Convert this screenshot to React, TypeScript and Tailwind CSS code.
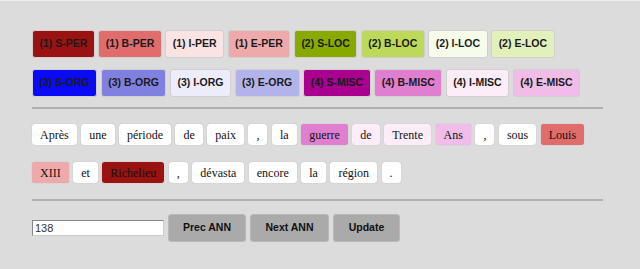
import React from 'react';

// NER annotation viewer: tag legend, annotated tokens, navigation controls
type Tag = { label: string; bg: string };

const TAG_ROWS: Tag[][] = [
  [
    { label: '(1) S-PER', bg: 'bg-[#9b1212]' },
    { label: '(1) B-PER', bg: 'bg-[#e06c6c]' },
    { label: '(1) I-PER', bg: 'bg-[#fae3e3]' },
    { label: '(1) E-PER', bg: 'bg-[#eeaaaa]' },
    { label: '(2) S-LOC', bg: 'bg-[#88aa00]' },
    { label: '(2) B-LOC', bg: 'bg-[#bcd95a]' },
    { label: '(2) I-LOC', bg: 'bg-[#f7fbea]' },
    { label: '(2) E-LOC', bg: 'bg-[#e2f0bc]' },
  ],
  [
    { label: '(3) S-ORG', bg: 'bg-[#0a0af8]' },
    { label: '(3) B-ORG', bg: 'bg-[#8080e0]' },
    { label: '(3) I-ORG', bg: 'bg-[#ececfb]' },
    { label: '(3) E-ORG', bg: 'bg-[#b3b3eb]' },
    { label: '(4) S-MISC', bg: 'bg-[#aa0090]' },
    { label: '(4) B-MISC', bg: 'bg-[#e07fd0]' },
    { label: '(4) I-MISC', bg: 'bg-[#fcedf9]' },
    { label: '(4) E-MISC', bg: 'bg-[#f0bde8]' },
  ],
];

const TOKENS: { w: string; bg?: string }[] = [
  { w: 'Après' },
  { w: 'une' },
  { w: 'période' },
  { w: 'de' },
  { w: 'paix' },
  { w: ',' },
  { w: 'la' },
  { w: 'guerre', bg: 'bg-[#e07fd0]' },
  { w: 'de', bg: 'bg-[#fcedf9]' },
  { w: 'Trente', bg: 'bg-[#fcedf9]' },
  { w: 'Ans', bg: 'bg-[#f0bde8]' },
  { w: ',' },
  { w: 'sous' },
  { w: 'Louis', bg: 'bg-[#e06c6c]' },
  { w: 'XIII', bg: 'bg-[#eeaaaa]' },
  { w: 'et' },
  { w: 'Richelieu', bg: 'bg-[#9b1212]' },
  { w: ',' },
  { w: 'dévasta' },
  { w: 'encore' },
  { w: 'la' },
  { w: 'région' },
  { w: '.' },
];

function TagButton({ tag }: { tag: Tag }) {
  return (
    <button
      className={`shrink-0 whitespace-nowrap h-[28px] px-[6.5px] rounded-[3px] border border-[#cfcfcf] font-bold text-[10.5px] text-[#1a1a1a] ${tag.bg}`}
      style={{ fontFamily: '"Liberation Sans", Arial, sans-serif' }}
    >
      {tag.label}
    </button>
  );
}

export default function App() {
  return (
    <div className="w-[640px] h-[269px] bg-[#dcdcdc] border-t border-[#eeeeee] overflow-hidden">
      <div className="pl-[32px] pt-[29px] w-[603px]">
        <div className="flex flex-col gap-[11px]">
          {TAG_ROWS.map((row, i) => (
            <div key={i} className="flex gap-[3.5px]">
              {row.map((t) => (
                <TagButton key={t.label} tag={t} />
              ))}
            </div>
          ))}
        </div>

        <div className="mt-[10px] h-[2px] bg-[#b0b0b0]" />

        <div
          className="mt-[15px] flex flex-wrap gap-x-[4.5px] gap-y-[17px] text-[12px] text-[#111]"
          style={{ fontFamily: '"Liberation Serif", "Times New Roman", serif' }}
        >
          {TOKENS.map((t, i) => (
            <span
              key={i}
              className={`h-[21px] px-[8px] flex items-center rounded-[3px] shadow-[0_0_1px_rgba(0,0,0,0.25)] ${t.bg ?? 'bg-white'}`}
            >
              {t.w}
            </span>
          ))}
        </div>

        <div className="mt-[16px] h-[2px] bg-[#b0b0b0]" />

        <div
          className="mt-[13px] flex items-center gap-[4px] text-[10.5px]"
          style={{ fontFamily: '"Liberation Sans", Arial, sans-serif' }}
        >
          <input
            defaultValue="138"
            className="w-[132px] h-[16px] bg-white border border-t-[#888] border-l-[#888] border-r-[#ccc] border-b-[#ccc] px-[2px] text-[11px] text-[#333] outline-none"
          />
          <button className="h-[28px] w-[78px] rounded-[3px] bg-[#aaaaaa] border border-[#b8b8b8] font-bold text-[#111]">
            Prec ANN
          </button>
          <button className="h-[28px] w-[79px] rounded-[3px] bg-[#aaaaaa] border border-[#b8b8b8] font-bold text-[#111]">
            Next ANN
          </button>
          <button className="h-[28px] w-[67px] rounded-[3px] bg-[#aaaaaa] border border-[#b8b8b8] font-bold text-[#111]">
            Update
          </button>
        </div>
      </div>
    </div>
  );
}
